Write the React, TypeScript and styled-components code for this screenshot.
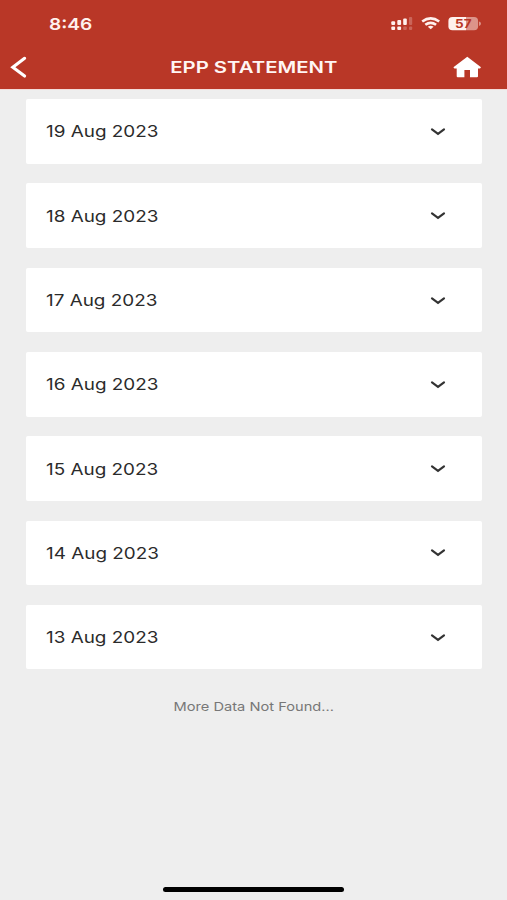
import React from "react";
import styled, { createGlobalStyle } from "styled-components";

const GlobalStyle = createGlobalStyle`
  *, *::before, *::after { box-sizing: border-box; }
  body {
    margin: 0;
    background: #eeeeee;
    font-family: Inter, "Liberation Sans", sans-serif;
  }
`;

const Screen = styled.div`
  width: 507px;
  height: 900px;
  display: flex;
  flex-direction: column;
  overflow: hidden;
  background: #eeeeee;
`;

const Header = styled.header`
  height: 89px;
  flex: none;
  background: #b93727;
  box-shadow: 0 1px 0 #f3dcd9;
`;

const StatusBar = styled.div`
  height: 47px;
  padding: 0 26px 0 49px;
  display: flex;
  align-items: center;
  justify-content: space-between;
`;

const WideText = styled.span<{ $stretch: number; $origin?: string }>`
  display: inline-block;
  white-space: nowrap;
  transform: scaleX(${(p) => p.$stretch});
  transform-origin: ${(p) => p.$origin ?? "left"} center;
`;

const Clock = styled(WideText)`
  color: #fff1ee;
  font-size: 16.5px;
  font-weight: 600;
  line-height: 20px;
`;

const StatusIcons = styled.svg`
  display: block;
  width: 92px;
  height: 20px;
`;

const BatteryLabel = styled.text`
  font-size: 11.5px;
  font-weight: 700;
  fill: #b93727;
`;

const NavBar = styled.nav`
  height: 39px;
  padding: 0 25px 0 10px;
  display: grid;
  grid-template-columns: 30px 1fr 30px;
  align-items: center;
`;

const IconButton = styled.button`
  display: flex;
  padding: 0;
  border: 0;
  background: none;
  color: #fff;
`;

const Title = styled.h1`
  margin: 0 0 0 15px;
  text-align: center;
  color: #fff6f4;
  font-size: 16px;
  font-weight: 600;
  line-height: 20px;
`;

const List = styled.main`
  padding: 10.2px 25px 0 26px;
  display: flex;
  flex-direction: column;
  gap: 19.8px;
`;

const Card = styled.section`
  height: 64.5px;
  padding: 0 36px 0 20px;
  display: flex;
  align-items: center;
  justify-content: space-between;
  background: #fff;
  border-radius: 2px;
`;

const DateText = styled(WideText)`
  color: #2b2b2b;
  font-size: 16px;
  line-height: 20px;
`;

const Footer = styled.p`
  margin: 30px 0 0;
  text-align: center;
  color: #777;
  font-size: 12px;
  line-height: 16px;
`;

const HomeIndicator = styled.div`
  width: 181px;
  height: 5px;
  margin: auto auto 8px 163.4px;
  flex: none;
  border-radius: 3px;
  background: #000;
`;

const dates = [19, 18, 17, 16, 15, 14, 13].map((day) => `${day} Aug 2023`);

const Indicators = () => (
  <StatusIcons viewBox="389 14 92 20" fill="#fff1ee">
    <rect x="391.3" y="21.2" width="3.8" height="3.8" rx="1" />
    <rect x="397.3" y="20" width="3.8" height="5" rx="1" />
    <rect x="403.2" y="18.6" width="3.6" height="6.4" rx="1" />
    <rect x="409" y="17" width="3.2" height="8" rx="1" opacity="0.25" />
    <rect x="391.3" y="26.6" width="3.8" height="3.5" rx="1" />
    <rect x="397.3" y="26.6" width="3.8" height="3.5" rx="1" />
    <rect x="403.2" y="26.6" width="3.6" height="3.5" rx="1" opacity="0.25" />
    <rect x="409" y="26.6" width="3.2" height="3.5" rx="1" opacity="0.25" />
    <g fill="none" stroke="#fff1ee" strokeWidth="2.6">
      <path d="M422.2 21.5Q430.7 15.1 439.2 21.5" />
      <path d="M425.3 24.8Q430.7 20.8 436.1 24.8" />
    </g>
    <path d="M427.8 26.7Q430.7 24.6 433.6 26.7L430.7 29.3Z" />
    <path d="M452.5 17H466V30.3H452.5Q448.4 30.3 448.4 26.3V21Q448.4 17 452.5 17Z" />
    <path d="M466 17H474Q478.1 17 478.1 21V26.3Q478.1 30.3 474 30.3H466Z" opacity="0.5" />
    <path d="M479 21.5Q481 22.1 481 23.7T479 25.9Z" opacity="0.5" />
    <BatteryLabel x="455" y="27.9" textLength="16.5" lengthAdjust="spacingAndGlyphs">57</BatteryLabel>
  </StatusIcons>
);

const BackIcon = () => (
  <svg width="18" height="24" viewBox="10 55 18 24" fill="none">
    <path d="M24.6 58.3L12.8 67.2L24.6 76.1" stroke="currentColor" strokeWidth="3.1" strokeLinecap="round" strokeLinejoin="miter" />
  </svg>
);

const HomeIcon = () => (
  <svg width="30" height="24" viewBox="452 55 30 24" fill="currentColor">
    <path d="M467.3 56.7L481 67.3L480 68.6H478V76.2Q478 77.2 477 77.2H470V70H464.4V77.2H457.8Q456.7 77.2 456.7 76.2V68.6H454.4L453.4 67.3Z" />
  </svg>
);

const ChevronIcon = styled.svg`
  display: block;
  width: 16px;
  height: 10px;
  margin-top: 1px;
`;

const Chevron = () => (
  <ChevronIcon viewBox="0 0 16 10" fill="none">
    <path d="M2 2.4L8 6.9L14 2.4" stroke="#333" strokeWidth="2.2" strokeLinecap="round" strokeLinejoin="miter" />
  </ChevronIcon>
);

export default function App() {
  return (
    <>
      <GlobalStyle />
      <Screen>
        <Header>
          <StatusBar>
            <Clock $stretch={1.16}>8:46</Clock>
            <Indicators />
          </StatusBar>
          <NavBar>
            <IconButton aria-label="Back"><BackIcon /></IconButton>
            <Title><WideText $stretch={1.27} $origin="center">EPP STATEMENT</WideText></Title>
            <IconButton aria-label="Home"><HomeIcon /></IconButton>
          </NavBar>
        </Header>
        <List>
          {dates.map((date) => (
            <Card key={date}>
              <DateText $stretch={1.18}>{date}</DateText>
              <Chevron />
            </Card>
          ))}
        </List>
        <Footer><WideText $stretch={1.22} $origin="center">More Data Not Found...</WideText></Footer>
        <HomeIndicator />
      </Screen>
    </>
  );
}
